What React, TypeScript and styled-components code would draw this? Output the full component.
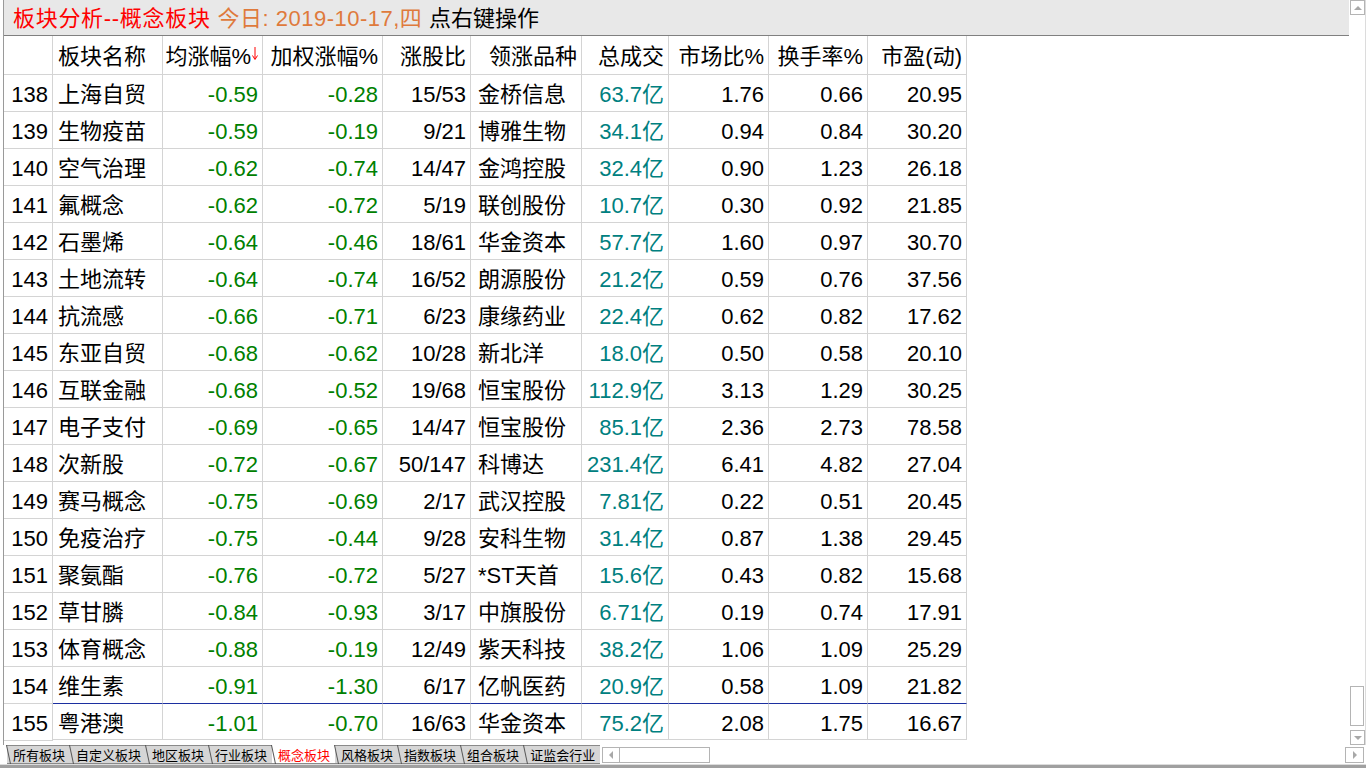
import styled, { createGlobalStyle } from 'styled-components';

const GlobalStyle = createGlobalStyle`
  html, body {
    margin: 0;
    padding: 0;
    background: #ffffff;
    overflow: hidden;
  }
  * { box-sizing: border-box; }
`;

const FONT = `"Liberation Sans", "Noto Sans CJK SC", sans-serif`;

type Tone = 'plain' | 'green' | 'teal';
type Align = 'left' | 'right';

interface Row {
  id: number;
  name: string;
  avg: string;
  weighted: string;
  ratio: string;
  leader: string;
  volume: string;
  market: string;
  turnover: string;
  pe: string;
}

const rows: Row[] = [
  { id: 138, name: '上海自贸', avg: '-0.59', weighted: '-0.28', ratio: '15/53', leader: '金桥信息', volume: '63.7亿', market: '1.76', turnover: '0.66', pe: '20.95' },
  { id: 139, name: '生物疫苗', avg: '-0.59', weighted: '-0.19', ratio: '9/21', leader: '博雅生物', volume: '34.1亿', market: '0.94', turnover: '0.84', pe: '30.20' },
  { id: 140, name: '空气治理', avg: '-0.62', weighted: '-0.74', ratio: '14/47', leader: '金鸿控股', volume: '32.4亿', market: '0.90', turnover: '1.23', pe: '26.18' },
  { id: 141, name: '氟概念', avg: '-0.62', weighted: '-0.72', ratio: '5/19', leader: '联创股份', volume: '10.7亿', market: '0.30', turnover: '0.92', pe: '21.85' },
  { id: 142, name: '石墨烯', avg: '-0.64', weighted: '-0.46', ratio: '18/61', leader: '华金资本', volume: '57.7亿', market: '1.60', turnover: '0.97', pe: '30.70' },
  { id: 143, name: '土地流转', avg: '-0.64', weighted: '-0.74', ratio: '16/52', leader: '朗源股份', volume: '21.2亿', market: '0.59', turnover: '0.76', pe: '37.56' },
  { id: 144, name: '抗流感', avg: '-0.66', weighted: '-0.71', ratio: '6/23', leader: '康缘药业', volume: '22.4亿', market: '0.62', turnover: '0.82', pe: '17.62' },
  { id: 145, name: '东亚自贸', avg: '-0.68', weighted: '-0.62', ratio: '10/28', leader: '新北洋', volume: '18.0亿', market: '0.50', turnover: '0.58', pe: '20.10' },
  { id: 146, name: '互联金融', avg: '-0.68', weighted: '-0.52', ratio: '19/68', leader: '恒宝股份', volume: '112.9亿', market: '3.13', turnover: '1.29', pe: '30.25' },
  { id: 147, name: '电子支付', avg: '-0.69', weighted: '-0.65', ratio: '14/47', leader: '恒宝股份', volume: '85.1亿', market: '2.36', turnover: '2.73', pe: '78.58' },
  { id: 148, name: '次新股', avg: '-0.72', weighted: '-0.67', ratio: '50/147', leader: '科博达', volume: '231.4亿', market: '6.41', turnover: '4.82', pe: '27.04' },
  { id: 149, name: '赛马概念', avg: '-0.75', weighted: '-0.69', ratio: '2/17', leader: '武汉控股', volume: '7.81亿', market: '0.22', turnover: '0.51', pe: '20.45' },
  { id: 150, name: '免疫治疗', avg: '-0.75', weighted: '-0.44', ratio: '9/28', leader: '安科生物', volume: '31.4亿', market: '0.87', turnover: '1.38', pe: '29.45' },
  { id: 151, name: '聚氨酯', avg: '-0.76', weighted: '-0.72', ratio: '5/27', leader: '*ST天首', volume: '15.6亿', market: '0.43', turnover: '0.82', pe: '15.68' },
  { id: 152, name: '草甘膦', avg: '-0.84', weighted: '-0.93', ratio: '3/17', leader: '中旗股份', volume: '6.71亿', market: '0.19', turnover: '0.74', pe: '17.91' },
  { id: 153, name: '体育概念', avg: '-0.88', weighted: '-0.19', ratio: '12/49', leader: '紫天科技', volume: '38.2亿', market: '1.06', turnover: '1.09', pe: '25.29' },
  { id: 154, name: '维生素', avg: '-0.91', weighted: '-1.30', ratio: '6/17', leader: '亿帆医药', volume: '20.9亿', market: '0.58', turnover: '1.09', pe: '21.82' },
  { id: 155, name: '粤港澳', avg: '-1.01', weighted: '-0.70', ratio: '16/63', leader: '华金资本', volume: '75.2亿', market: '2.08', turnover: '1.75', pe: '16.67' },
];

const tabs = ['所有板块', '自定义板块', '地区板块', '行业板块', '概念板块', '风格板块', '指数板块', '组合板块', '证监会行业'];

const Screen = styled.div`
  width: 1366px;
  height: 768px;
  display: flex;
  flex-direction: column;
  font-family: ${FONT};
`;

const Body = styled.div`
  display: flex;
  height: 745px;
`;

const Main = styled.div`
  width: 1346px;
  margin-left: 3px;
  border-left: 1px solid #9a9a9a;
  display: flex;
  flex-direction: column;
`;

const TitleBar = styled.div`
  height: 36px;
  background: #e8e8e8;
  border-bottom: 1px solid #808080;
  display: flex;
  align-items: center;
  padding: 2px 0 0 9px;
  font-size: 22px;
  line-height: 1;
  white-space: pre;
`;

const TitlePart = styled.span<{ $color: string; $spacing?: number }>`
  color: ${(p) => p.$color};
  letter-spacing: ${(p) => p.$spacing ?? 0}px;
`;

const Grid = styled.div`
  display: grid;
  grid-template-columns: 49px 110px 100px 120px 88px 111px 87px 100px 99px 99px;
  width: 963px;
`;

const Cell = styled.div<{ $align?: Align; $tone?: Tone; $head?: boolean; $mark?: boolean }>`
  height: ${(p) => (p.$head ? '39px' : '37px')};
  border-right: 1px solid #d4d4d4;
  border-bottom: 1px solid #d4d4d4;
  border-top: ${(p) => (p.$mark ? '1px solid #1c2fa0' : 'none')};
  margin-top: ${(p) => (p.$mark ? '-1px' : '0')};
  display: flex;
  align-items: center;
  justify-content: ${(p) => (p.$align === 'left' ? 'flex-start' : 'flex-end')};
  padding: ${(p) => (p.$align === 'left' ? '4px 0 0 5px' : '4px 4px 0 0')};
  font-size: 22px;
  line-height: 1;
  white-space: nowrap;
  color: ${(p) => (p.$tone === 'green' ? '#008000' : p.$tone === 'teal' ? '#008080' : '#000000')};
`;

const LeaderCell = styled(Cell)`
  padding-left: 7px;
`;

const SortArrow = styled.svg`
  align-self: flex-start;
  margin-top: 7px;
  margin-left: 1px;
`;

const VScroll = styled.div`
  width: 17px;
  display: flex;
  flex-direction: column;
  align-items: flex-start;
  padding-left: 1px;
  border-right: 1px solid #dcdcdc;
`;

const ScrollBtn = styled.div`
  width: 15px;
  height: 15px;
  border: 1px solid #b4b4b4;
  display: flex;
  align-items: center;
  justify-content: center;
  background: #ffffff;
`;

const Spacer = styled.div`
  flex: 1;
`;

const Thumb = styled.div`
  width: 14px;
  height: 40px;
  border: 1px solid #b4b4b4;
  margin-bottom: 4px;
`;

const TabBar = styled.div`
  height: 19px;
  display: flex;
  align-items: stretch;
  padding-left: 7px;
`;

const Tab = styled.div<{ $active?: boolean }>`
  position: relative;
  display: flex;
  align-items: center;
  padding: 0 5px 0 6px;
  background: ${(p) => (p.$active ? '#ffffff' : '#d6d6d6')};
  border-top: 1px solid ${(p) => (p.$active ? '#ffffff' : '#8a8a8a')};
  border-bottom: 1px solid #8a8a8a;
  color: ${(p) => (p.$active ? '#ff0000' : '#000000')};
  font-family: "Noto Sans CJK SC", sans-serif;
  font-size: 13px;
  line-height: 1;
  &::before {
    content: '';
    position: absolute;
    left: 1px;
    top: -1px;
    bottom: -1px;
    width: 1px;
    background: #555555;
    transform: skewX(12deg);
  }
`;

const HScroll = styled.div`
  width: 108px;
  margin: 2px 0 0 2px;
  height: 16px;
  border: 1px solid #b4b4b4;
  display: flex;
`;

const HScrollBtn = styled.div`
  width: 17px;
  height: 14px;
  border-right: 1px solid #b4b4b4;
  display: flex;
  align-items: center;
  justify-content: center;
`;

const RightBtn = styled.div`
  width: 19px;
  height: 16px;
  margin: 2px 2px 0 0;
  border: 1px solid #b4b4b4;
  display: flex;
  align-items: center;
  justify-content: center;
`;

const BottomBar = styled.div`
  height: 4px;
  border-top: 1px solid #dcdcdc;
  background: #a0a0a0;
`;

function Triangle({ dir }: { dir: 'up' | 'down' | 'left' | 'right' }) {
  const pts = {
    up: '0,4 8,4 4,0',
    down: '0,0 8,0 4,4',
    left: '4,0 4,8 0,4',
    right: '0,0 0,8 4,4',
  }[dir];
  const vertical = dir === 'up' || dir === 'down';
  return (
    <svg width={vertical ? 8 : 4} height={vertical ? 4 : 8} viewBox={vertical ? '0 0 8 4' : '0 0 4 8'}>
      <polygon points={pts} fill="#a8a8a8" />
    </svg>
  );
}

export default function App() {
  const last = rows[rows.length - 1].id;
  return (
    <Screen>
      <GlobalStyle />
      <Body>
        <Main>
          <TitleBar>
            <TitlePart $color="#ff0000" $spacing={0.7}>板块分析--概念板块 </TitlePart>
            <TitlePart $color="#df7a3c" $spacing={0.5}>今日: 2019-10-17,四 </TitlePart>
            <TitlePart $color="#000000">点右键操作</TitlePart>
          </TitleBar>
          <Grid>
            <Cell $head />
            <Cell $head $align="left">板块名称</Cell>
            <Cell $head>
              均涨幅%
              <SortArrow width="6" height="14" viewBox="0 0 6 14">
                <line x1="3" y1="0" x2="3" y2="12" stroke="#ff0000" strokeWidth="1" />
                <polyline points="0.5,8.5 3,12.5 5.5,8.5" fill="none" stroke="#ff0000" strokeWidth="1" />
              </SortArrow>
            </Cell>
            <Cell $head>加权涨幅%</Cell>
            <Cell $head>涨股比</Cell>
            <Cell $head>领涨品种</Cell>
            <Cell $head>总成交</Cell>
            <Cell $head>市场比%</Cell>
            <Cell $head>换手率%</Cell>
            <Cell $head>市盈(动)</Cell>
            {rows.map((r) => {
              const mark = r.id === last;
              return [
                <Cell key={`${r.id}-id`}>{r.id}</Cell>,
                <Cell key={`${r.id}-n`} $align="left" $mark={mark}>{r.name}</Cell>,
                <Cell key={`${r.id}-a`} $tone="green" $mark={mark}>{r.avg}</Cell>,
                <Cell key={`${r.id}-w`} $tone="green" $mark={mark}>{r.weighted}</Cell>,
                <Cell key={`${r.id}-r`} $mark={mark}>{r.ratio}</Cell>,
                <LeaderCell key={`${r.id}-l`} $align="left" $mark={mark}>{r.leader}</LeaderCell>,
                <Cell key={`${r.id}-v`} $tone="teal" $mark={mark}>{r.volume}</Cell>,
                <Cell key={`${r.id}-m`} $mark={mark}>{r.market}</Cell>,
                <Cell key={`${r.id}-t`} $mark={mark}>{r.turnover}</Cell>,
                <Cell key={`${r.id}-p`} $mark={mark}>{r.pe}</Cell>,
              ];
            })}
          </Grid>
        </Main>
        <VScroll>
          <ScrollBtn>
            <Triangle dir="up" />
          </ScrollBtn>
          <Spacer />
          <Thumb />
          <ScrollBtn>
            <Triangle dir="down" />
          </ScrollBtn>
        </VScroll>
      </Body>
      <TabBar>
        {tabs.map((t) => (
          <Tab key={t} $active={t === '概念板块'}>
            {t}
          </Tab>
        ))}
        <HScroll>
          <HScrollBtn>
            <Triangle dir="left" />
          </HScrollBtn>
        </HScroll>
        <Spacer />
        <RightBtn>
          <Triangle dir="right" />
        </RightBtn>
      </TabBar>
      <BottomBar />
    </Screen>
  );
}
